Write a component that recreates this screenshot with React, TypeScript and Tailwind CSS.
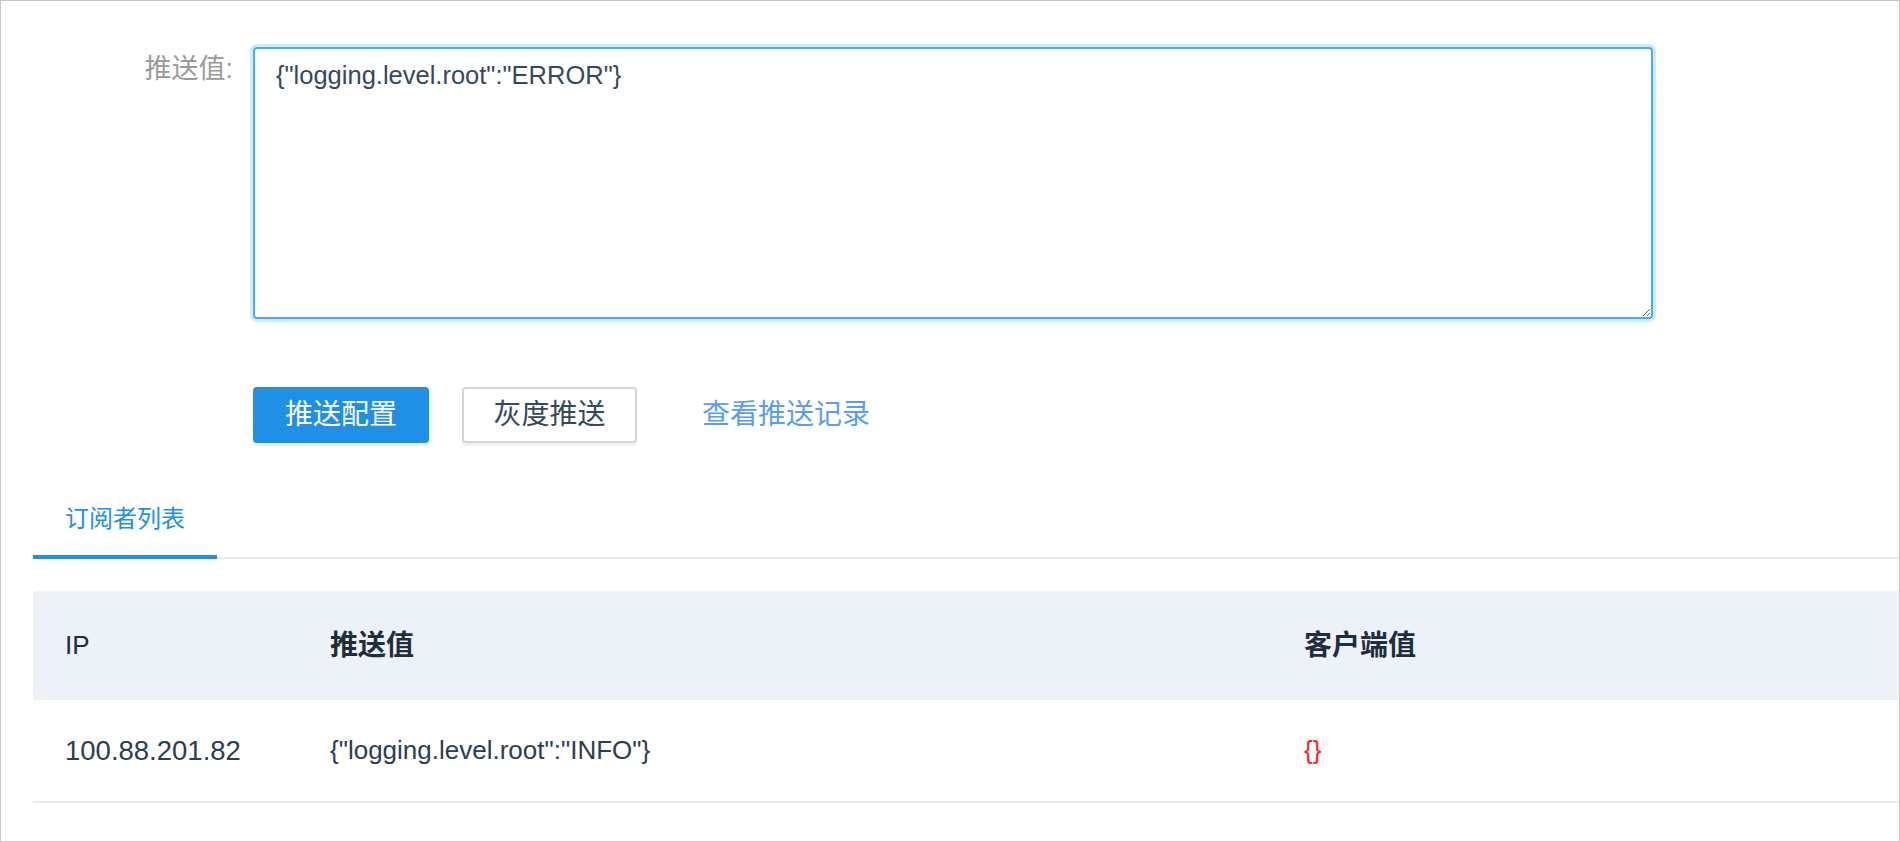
import React from "react"

const font = "font-['Liberation_Sans','Noto_Sans_CJK_SC',sans-serif]"

const subscribers = [
  { ip: "100.88.201.82", pushed: '{"logging.level.root":"INFO"}', client: "{}" },
]

export default function App() {
  return (
    <div className={`w-[1900px] h-[842px] border border-[#c8c8c8] bg-white overflow-hidden ${font}`}>
      <div className="pl-[32px] pt-[46px]">
        {/* push value form */}
        <div className="flex items-start">
          <label className="w-[200px] mt-[2px] text-right text-[27px] leading-[40px] text-[#9a9a9a]">
            推送值:
          </label>
          <textarea
            defaultValue={'{"logging.level.root":"ERROR"}'}
            className={`ml-[20px] w-[1400px] h-[272px] rounded-[4px] border-2 border-[#43aef5] pl-[21px] pt-[8px] text-[25.5px] leading-[36px] text-[#34495e] outline-none shadow-[0_0_0_3px_#d3eafc] ${font}`}
          />
        </div>

        <div className="flex items-center ml-[220px] mt-[68px]">
          <button className="w-[176px] h-[56px] rounded-[4px] bg-[#2090e6] text-white text-[28px] shadow-[0_3px_0_#eef0f3]">
            推送配置
          </button>
          <button className="ml-[33px] w-[175px] h-[56px] rounded-[4px] border-2 border-[#d2d6dc] bg-white text-[#34495e] text-[28px] shadow-[0_3px_0_#f1f2f4]">
            灰度推送
          </button>
          <a className="ml-[65px] text-[28px] text-[#5b9dec] cursor-pointer">查看推送记录</a>
        </div>

        {/* tabs */}
        <div className="flex mt-[60px] border-b-2 border-[#e8eaef]">
          <div className="-mb-[2px] px-[32px] pb-[20px] border-b-4 border-[#2090e6] text-[24px] leading-[32px] text-[#2090e6]">
            订阅者列表
          </div>
        </div>

        {/* subscriber table */}
        <div className="mt-[32px]">
          <div className="grid grid-cols-[265px_974px_1fr] h-[109px] items-center bg-[#edf1f8] rounded-tl-[4px] text-[#1f2d3d]">
            <div className="pl-[32px] text-[26px]">IP</div>
            <div className="pl-[32px] text-[28px] font-bold">推送值</div>
            <div className="pl-[32px] text-[28px] font-bold">客户端值</div>
          </div>
          {subscribers.map((s) => (
            <div
              key={s.ip}
              className="grid grid-cols-[265px_974px_1fr] h-[103px] items-center border-b-2 border-[#e8ebf0] text-[26px] text-[#2c3e50]"
            >
              <div className="pl-[32px] text-[27.5px]">{s.ip}</div>
              <div className="pl-[32px]">{s.pushed}</div>
              <div className="pl-[32px] text-[#f5222d]">{s.client}</div>
            </div>
          ))}
        </div>
      </div>
    </div>
  )
}
